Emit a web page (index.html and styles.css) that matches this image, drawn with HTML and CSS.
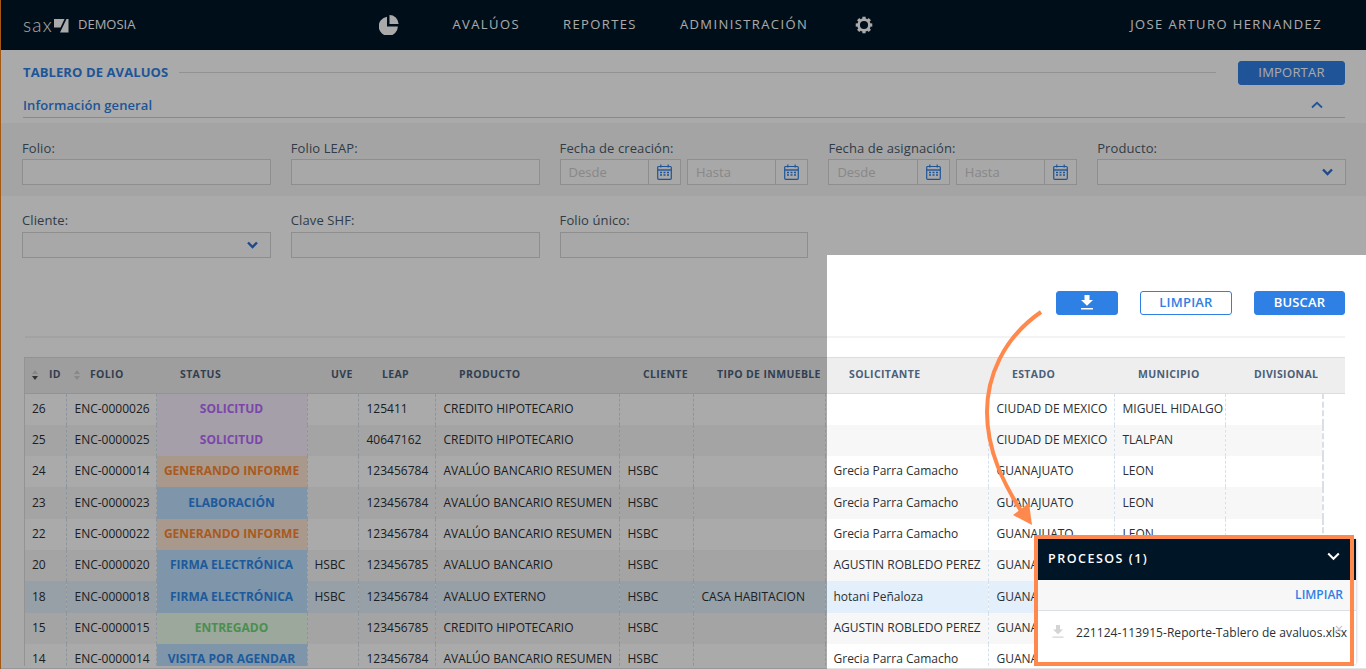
FILE: index.html
```html
<!DOCTYPE html>
<html lang="es">
<head>
<meta charset="utf-8">
<title>Tablero de avaluos</title>
<link rel="stylesheet" href="styles.css">
</head>
<body>
<div class="page">
  <header class="nav">
    <div class="brand">
      <span class="logo-text">sax</span>
      <svg class="logo-mark" width="15" height="14" viewBox="0 0 15 14"><path d="M0 0H10.500L6.500 8.500H0Z M14.500 0V13.500H6L12.500 0Z" fill="#fff"/></svg>
      <span class="brand-name">DEMOSIA</span>
    </div>
    <nav class="menu">
      <svg class="pie" width="20" height="20" viewBox="0 0 20 20"><path d="M8 1.800V11.500H18.900A9.600 9.600 0 1 1 8 1.800Z" fill="#fff"/><path d="M10.500 0A9 9 0 0 1 19.500 8.500V9H10.500Z" fill="#fff"/></svg>
      <a class="menu-item">AVALÚOS</a>
      <a class="menu-item">REPORTES</a>
      <a class="menu-item">ADMINISTRACIÓN</a>
      <svg class="gear" width="18" height="18" viewBox="0 0 20 20">
        <circle cx="10" cy="10" r="6" fill="none" stroke="#fff" stroke-width="3"/>
        <g stroke="#fff" stroke-width="3.600">
          <line x1="10" y1="0.800" x2="10" y2="4"/><line x1="10" y1="16" x2="10" y2="19.200"/>
          <line x1="0.800" y1="10" x2="4" y2="10"/><line x1="16" y1="10" x2="19.200" y2="10"/>
          <line x1="3.500" y1="3.500" x2="5.800" y2="5.800"/><line x1="14.200" y1="14.200" x2="16.500" y2="16.500"/>
          <line x1="16.500" y1="3.500" x2="14.200" y2="5.800"/><line x1="5.800" y1="14.200" x2="3.500" y2="16.500"/>
        </g>
      </svg>
    </nav>
    <span class="user">JOSE ARTURO HERNANDEZ</span>
  </header>

  <main class="main">
    <div class="title-row">
      <h1 class="title">TABLERO DE AVALUOS</h1>
      <span class="title-line"></span>
      <button class="btn btn-solid btn-import">IMPORTAR</button>
    </div>
    <div class="section-head">
      <h2 class="section-title">Información general</h2>
      <svg class="section-chevron" width="12" height="8" viewBox="0 0 12 8"><polyline points="1,6.500 6,1.800 11,6.500" fill="none" stroke="#2f80e4" stroke-width="1.800"/></svg>
    </div>

    <section class="filters filters-band">
      <div class="field"><label class="label">Folio:</label><div class="input"></div></div>
      <div class="field"><label class="label">Folio LEAP:</label><div class="input"></div></div>
      <div class="field">
        <label class="label">Fecha de creación:</label>
        <div class="dates">
          <div class="date"><span class="date-text">Desde</span><span class="date-icon"><svg class="cal" width="15" height="16" viewBox="0 0 15 16"><use href="#cal"/></svg></span></div>
          <div class="date"><span class="date-text">Hasta</span><span class="date-icon"><svg class="cal" width="15" height="16" viewBox="0 0 15 16"><use href="#cal"/></svg></span></div>
        </div>
      </div>
      <div class="field">
        <label class="label">Fecha de asignación:</label>
        <div class="dates">
          <div class="date"><span class="date-text">Desde</span><span class="date-icon"><svg class="cal" width="15" height="16" viewBox="0 0 15 16"><use href="#cal"/></svg></span></div>
          <div class="date"><span class="date-text">Hasta</span><span class="date-icon"><svg class="cal" width="15" height="16" viewBox="0 0 15 16"><use href="#cal"/></svg></span></div>
        </div>
      </div>
      <div class="field"><label class="label">Producto:</label><div class="input select"><svg width="11" height="8" viewBox="0 0 11 8"><polyline points="1,1.500 5.500,6 10,1.500" fill="none" stroke="#2f6fd0" stroke-width="2.400"/></svg></div></div>
    </section>
    <section class="filters filters-second">
      <div class="field"><label class="label label-tight">Cliente:</label><div class="input select"><svg width="11" height="8" viewBox="0 0 11 8"><polyline points="1,1.500 5.500,6 10,1.500" fill="none" stroke="#2f6fd0" stroke-width="2.400"/></svg></div></div>
      <div class="field"><label class="label label-tight">Clave SHF:</label><div class="input"></div></div>
      <div class="field"><label class="label label-tight">Folio único:</label><div class="input"></div></div>
    </section>

    <div class="actions">
      <button class="btn btn-solid btn-dl" aria-label="Descargar"><svg width="14" height="15" viewBox="0 0 14 15"><path d="M4.500 0H9.500V5H13L7 10.800 1 5H4.500Z M1 13H13V14.500H1Z" fill="#fff"/></svg></button>
      <button class="btn btn-outline">LIMPIAR</button>
      <button class="btn btn-solid btn-search">BUSCAR</button>
    </div>
    <div class="divider"></div>

    <div class="table-wrap">
      <table class="grid">
        <colgroup>
          <col class="c-id"><col class="c-folio"><col class="c-status"><col class="c-uve"><col class="c-leap"><col class="c-prod"><col class="c-cli"><col class="c-tipo"><col class="c-sol"><col class="c-est"><col class="c-mun"><col class="c-div"><col class="c-end">
        </colgroup>
        <thead>
          <tr>
            <th><span class="sort sort-down"></span>ID</th>
            <th><span class="sort"></span>FOLIO</th>
            <th>STATUS</th><th>UVE</th><th>LEAP</th><th>PRODUCTO</th><th>CLIENTE</th><th>TIPO DE INMUEBLE</th><th>SOLICITANTE</th><th>ESTADO</th><th>MUNICIPIO</th><th class="th-div">DIVISIONAL</th><th></th>
          </tr>
        </thead>
        <tbody>
          <tr><td>26</td><td>ENC-0000026</td><td class="st st-purple">SOLICITUD</td><td></td><td>125411</td><td>CREDITO HIPOTECARIO</td><td></td><td></td><td></td><td>CIUDAD DE MEXICO</td><td>MIGUEL HIDALGO</td><td class="td-last"></td><td></td></tr>
          <tr><td>25</td><td>ENC-0000025</td><td class="st st-purple">SOLICITUD</td><td></td><td>40647162</td><td>CREDITO HIPOTECARIO</td><td></td><td></td><td></td><td>CIUDAD DE MEXICO</td><td>TLALPAN</td><td class="td-last"></td><td></td></tr>
          <tr><td>24</td><td>ENC-0000014</td><td class="st st-orange">GENERANDO INFORME</td><td></td><td>123456784</td><td>AVALÚO BANCARIO RESUMEN</td><td>HSBC</td><td></td><td>Grecia Parra Camacho</td><td>GUANAJUATO</td><td>LEON</td><td class="td-last"></td><td></td></tr>
          <tr><td>23</td><td>ENC-0000023</td><td class="st st-blue">ELABORACIÓN</td><td></td><td>123456784</td><td>AVALÚO BANCARIO RESUMEN</td><td>HSBC</td><td></td><td>Grecia Parra Camacho</td><td>GUANAJUATO</td><td>LEON</td><td class="td-last"></td><td></td></tr>
          <tr><td>22</td><td>ENC-0000022</td><td class="st st-orange">GENERANDO INFORME</td><td></td><td>123456784</td><td>AVALÚO BANCARIO RESUMEN</td><td>HSBC</td><td></td><td>Grecia Parra Camacho</td><td>GUANAJUATO</td><td>LEON</td><td class="td-last"></td><td></td></tr>
          <tr><td>20</td><td>ENC-0000020</td><td class="st st-blue">FIRMA ELECTRÓNICA</td><td class="td-uve">HSBC</td><td>123456785</td><td>AVALUO BANCARIO</td><td>HSBC</td><td></td><td>AGUSTIN ROBLEDO PEREZ</td><td>GUANAJUATO</td><td>LEON</td><td class="td-last"></td><td></td></tr>
          <tr class="selected"><td>18</td><td>ENC-0000018</td><td class="st st-blue">FIRMA ELECTRÓNICA</td><td class="td-uve">HSBC</td><td>123456784</td><td>AVALUO EXTERNO</td><td>HSBC</td><td>CASA HABITACION</td><td>hotani Peñaloza</td><td>GUANAJUATO</td><td>LEON</td><td class="td-last"></td><td></td></tr>
          <tr><td>15</td><td>ENC-0000015</td><td class="st st-green">ENTREGADO</td><td></td><td>123456785</td><td>CREDITO HIPOTECARIO</td><td>HSBC</td><td></td><td>AGUSTIN ROBLEDO PEREZ</td><td>GUANAJUATO</td><td>LEON</td><td class="td-last"></td><td></td></tr>
          <tr><td>14</td><td>ENC-0000014</td><td class="st st-blue">VISITA POR AGENDAR</td><td></td><td>123456784</td><td>AVALÚO BANCARIO RESUMEN</td><td>HSBC</td><td></td><td>Grecia Parra Camacho</td><td>GUANAJUATO</td><td>LEON</td><td class="td-last"></td><td></td></tr>
        </tbody>
      </table>
    </div>
  </main>

  <div class="edge"></div>
  <div class="dim dim-top"></div>
  <div class="dim dim-left"></div>

  <svg class="arrow" width="1366" height="669" viewBox="0 0 1366 669">
    <path d="M1041 312C1002 339 987 378 987 412C987 450 1003 483 1023 514" fill="none" stroke="#ff884d" stroke-width="4"/>
    <polygon points="1032,525 1013,515 1029,503" fill="#ff884d"/>
  </svg>

  <aside class="panel">
    <div class="panel-head">
      <span class="panel-title">PROCESOS (1)</span>
      <svg class="panel-chevron" width="13" height="9" viewBox="0 0 13 9"><polyline points="1.200,1.500 6.500,6.800 11.800,1.500" fill="none" stroke="#fff" stroke-width="2"/></svg>
    </div>
    <div class="panel-tools"><a class="panel-clear">LIMPIAR</a></div>
    <div class="panel-row">
      <svg class="panel-dl" width="12" height="13" viewBox="0 0 12 13"><path d="M4 0H8V4.500H11L6 9.200 1 4.500H4Z M0.500 11.500H11.500V12.800H0.500Z" fill="#d4d4d4"/></svg>
      <span class="panel-file">221124-113915-Reporte-Tablero de avaluos.xlsx</span>
      <svg class="panel-x" width="8" height="8" viewBox="0 0 8 8"><path d="M1 1L7 7M7 1L1 7" stroke="#c9c9c9" stroke-width="1.200"/></svg>
    </div>
  </aside>
  <div class="frame"></div>
</div>

<svg class="defs" width="0" height="0">
  <defs>
    <g id="cal" fill="none" stroke="#2f80e4">
      <rect x="0.700" y="2.500" width="13.600" height="12.800" rx="1" stroke-width="1.200"/>
      <path d="M0.700 6H14.300" stroke-width="1.400"/>
      <path d="M3.800 0.500V3.500M11.200 0.500V3.500" stroke-width="1.200"/>
      <path d="M3 8.500H5M6.500 8.500H8.500M10 8.500H12M3 11H5M6.500 11H8.500M10 11H12" stroke-width="1.300"/>
    </g>
  </defs>
</svg>
</body>
</html>
```
FILE: styles.css
```css
* { box-sizing: border-box; }
html, body { margin: 0; padding: 0; height: 100%; overflow: hidden; background: #fff; }
body { font-family: "Open Sans", "Liberation Sans", sans-serif; color: #2b2f33; }
.defs { position: absolute; }
.page {
  position: relative;
  width: 1366px;
  height: 669px;
  overflow: hidden;
  display: flex;
  flex-direction: column;
}

/* top bar */
.nav {
  flex: none;
  height: 50px;
  background: #001526;
  color: #fff;
  display: flex;
  align-items: center;
  padding: 0 44px 0 23px;
}
.brand { display: flex; align-items: center; }
.logo-text { font-family: "Lato", sans-serif; font-weight: 300; font-size: 19px; line-height: 20px; width: 31px; letter-spacing: 1.200px; margin-top: -1px; }
.logo-mark { margin-top: 2px; }
.brand-name { font-size: 13px; margin-left: 9px; margin-top: -2px; }
.menu { display: flex; align-items: center; margin-left: 244px; }
.pie { margin-right: 53px; }
.menu-item { font-size: 13px; font-weight: 400; letter-spacing: 1.400px; margin-right: 43px; margin-top: -2px; }
.gear { margin-left: 4px; margin-top: -1px; }
.user { margin-left: auto; font-size: 13px; letter-spacing: 1.400px; margin-top: -2px; }

/* main */
.main { flex: 1; min-height: 0; display: flex; flex-direction: column; padding-bottom: 2px; border-bottom: 1px solid #e4e4e4; }
.title-row { flex: none; display: flex; align-items: center; height: 24px; margin-top: 11px; padding: 0 21px 0 23px; }
.title { margin: -2px 0 0; font-size: 13px; letter-spacing: .1px; line-height: 20px; font-weight: 700; color: #2f80e4; white-space: nowrap; }
.title-line { flex: 1; height: 1px; background: #dcdcdc; margin: -1px 22px 0 11px; }
.btn { font-family: inherit; font-size: 13px; letter-spacing: .2px; border-radius: 3px; height: 24px; padding: 0 0 2px; cursor: pointer; display: flex; align-items: center; justify-content: center; font-weight: 600; }
.btn-solid { background: #2f80e4; border: 1px solid #2f80e4; color: #fff; }
.btn-outline { background: #fff; border: 1px solid #2f80e4; color: #2f80e4; width: 92px; }
.btn-import { width: 107px; font-weight: 500; }
.section-head { flex: none; height: 26px; margin: 7px 21px 0 23px; display: flex; align-items: center; justify-content: space-between; border-bottom: 1px solid #d0d0d0; }
.section-title { margin: 0; font-size: 13px; letter-spacing: .1px; font-weight: 600; color: #2f80e4; line-height: 24px; }
.section-chevron { margin-right: 22px; }

/* filters */
.filters { flex: none; display: grid; grid-template-columns: repeat(5, 1fr); column-gap: 20px; padding-left: 22px; padding-right: 20px; }
.filters-band { background: #f7f7f7; margin-top: 5px; padding-top: 16px; padding-bottom: 11px; }
.filters-second { padding-top: 15px; }
.label { display: block; height: 18px; line-height: 18px; font-size: 13px; letter-spacing: .1px; color: #4a5b6c; margin-bottom: 2px; }
.label-tight { margin-bottom: 3px; }
.input { height: 26px; border: 1px solid #d6d6d6; background: #fcfcfc; }
.select { display: flex; align-items: center; justify-content: flex-end; padding-right: 12px; }
.dates { display: flex; gap: 6px; height: 26px; }
.date { flex: 1; display: flex; border: 1px solid #d6d6d6; background: #fcfcfc; }
.date-text { flex: 1; padding-left: 8px; font-size: 13px; line-height: 24px; color: #ccc; }
.date-icon { flex: none; width: 32px; border-left: 1px solid #d6d6d6; display: flex; align-items: center; justify-content: center; }
.cal { display: block; }

/* actions */
.actions { flex: none; display: flex; justify-content: flex-end; margin-top: 33px; padding-right: 21px; }
.btn-dl { width: 62px; margin-right: 22px; }
.btn-search { width: 91px; margin-left: 22px; }
.divider { flex: none; height: 2px; background: #f3f3f3; margin: 21px 21px 0 25px; }

/* table */
.table-wrap { flex: 1; min-height: 0; overflow: hidden; margin: 19px 21px 0 24px; border-left: 1px solid #ddd; }
.grid { border-collapse: collapse; table-layout: fixed; width: 1320px; font-size: 12px; }
.c-id { width: 41px; } .c-folio { width: 90px; } .c-status { width: 151px; } .c-uve { width: 51px; }
.c-leap { width: 77px; } .c-prod { width: 184px; } .c-cli { width: 74px; } .c-tipo { width: 132px; }
.c-sol { width: 163px; } .c-est { width: 126px; } .c-mun { width: 111px; } .c-div { width: 98px; } .c-end { width: 22px; }
.grid th {
  position: relative;
  height: 36px;
  background: #eee;
  border-top: 1px solid #ddd;
  border-bottom: 1px solid #ddd;
  padding: 0 0 4px 24px;
  text-align: left;
  font-size: 10.500px;
  font-weight: 700;
  letter-spacing: .35px;
  color: #4c5f78;
  white-space: nowrap;
}
.grid .th-div { padding-left: 29px; }
.sort { position: absolute; left: 7px; top: 11px; width: 7px; height: 12px; }
.sort::before, .sort::after { content: ""; position: absolute; left: 0; border-left: 3.500px solid transparent; border-right: 3.500px solid transparent; }
.sort::before { top: 1px; border-bottom: 4px solid #ccc; }
.sort::after { top: 7px; border-top: 4px solid #ccc; }
.sort-down::after { border-top-color: #4f4f4f; }
.grid th:nth-child(2) .sort { left: 8px; }
.grid td {
  height: 31.330px;
  padding: 0 0 2px 8px;
  border-left: 1px dashed #d5e1ec;
  white-space: nowrap;
  overflow: hidden;
  color: #2b2f33;
}
.grid td:first-child { border-left: 0; padding-left: 7px; }
.grid .td-uve { padding-left: 7px; }
.grid tbody tr:nth-child(even) { background: #f7f7f7; }
.grid tbody tr.selected { background: #e3effb; }
.grid .st { padding: 0 0 2px; text-align: center; font-weight: 700; font-size: 12px; }
.st-purple { background: #f7effc; color: #b96aff !important; }
.st-orange { background: #fde6d2; color: #ff8630 !important; }
.st-blue { background: #bfe0ff; color: #2e88e9 !important; }
.st-green { background: #eafcea; color: #6fd77a !important; }
.grid td:last-child { border-left: 2px dashed #d9dfe5; background: #fff; }

.edge { position: absolute; left: 0; top: 0; width: 1px; height: 669px; background: #f5851f; }

/* dimming layer over everything but the highlighted area */
.dim { position: absolute; background: rgba(0, 0, 0, .335); }
.dim-top { left: 0; top: 0; width: 1366px; height: 255px; }
.dim-left { left: 0; top: 255px; width: 827px; height: 414px; }

.arrow { position: absolute; left: 0; top: 0; pointer-events: none; }

/* processes panel */
.panel {
  position: absolute;
  left: 1038px;
  top: 539px;
  width: 318px;
  height: 125px;
  background: #fff;
  box-shadow: 0 0 3px rgba(0, 0, 0, .25);
}
.panel-head { height: 41px; background: #001526; display: flex; align-items: center; justify-content: space-between; padding: 0 15px 0 10px; }
.panel-title { color: #fff; font-size: 12.500px; font-weight: 600; letter-spacing: 1.500px; margin-top: -3px; }
.panel-chevron { margin-top: -6px; margin-right: 1px; }
.panel-tools { height: 31px; background: #f7f7f7; border-bottom: 1px solid #dcdfe3; display: flex; align-items: center; justify-content: flex-end; padding-right: 13px; }
.panel-clear { color: #2f80e4; font-size: 12px; font-weight: 600; margin-top: -2px; }
.panel-row { position: relative; display: flex; align-items: center; height: 43px; padding: 0 0 0 14px; }
.panel-dl { flex: none; margin-top: -2px; }
.panel-file { font-size: 12px; letter-spacing: .06px; margin-left: 12px; white-space: nowrap; color: #2b2f33; }
.panel-x { position: absolute; left: 297px; top: 14px; }
.frame { position: absolute; left: 1034px; top: 535px; width: 320px; height: 131px; border: 4px solid #ff884d; pointer-events: none; }
```
